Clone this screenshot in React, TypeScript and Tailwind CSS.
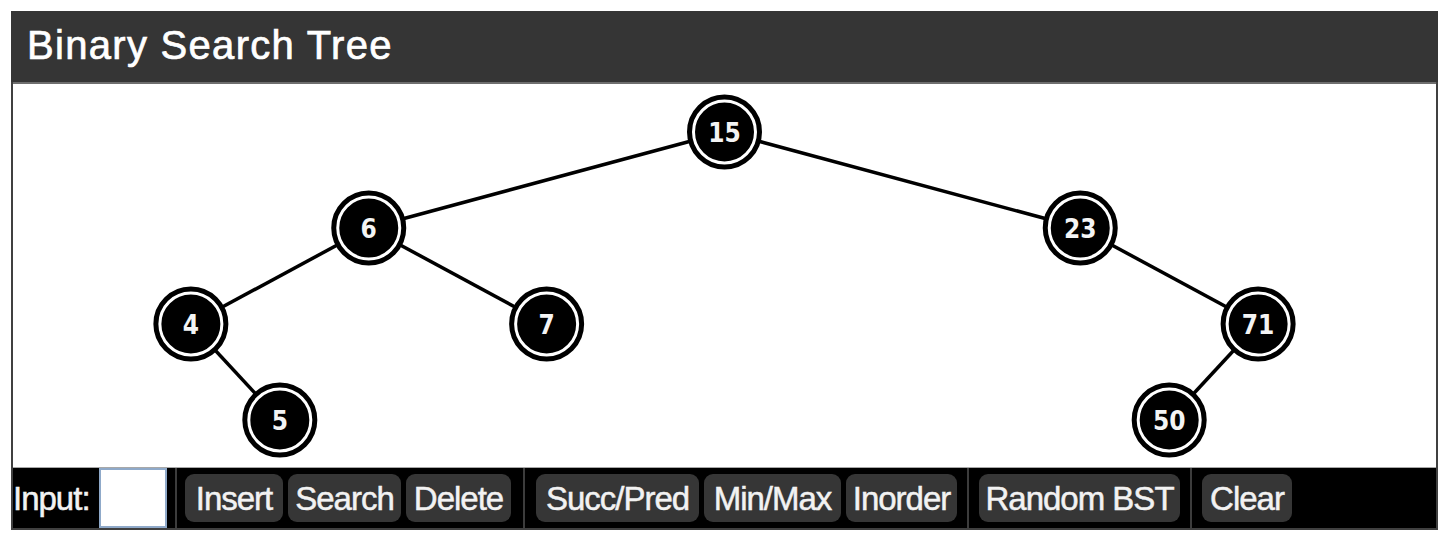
import React from "react";

type N = { v: number; x: number; d: number };

const W = 1423;
const H = 383;
const levelY = [48, 144, 240, 336];

const nodes: Record<string, N> = {
  n15: { v: 15, x: W / 2, d: 0 },
  n6: { v: 6, x: W / 4, d: 1 },
  n23: { v: 23, x: (3 * W) / 4, d: 1 },
  n4: { v: 4, x: W / 8, d: 2 },
  n7: { v: 7, x: (3 * W) / 8, d: 2 },
  n71: { v: 71, x: (7 * W) / 8, d: 2 },
  n5: { v: 5, x: (3 * W) / 16, d: 3 },
  n50: { v: 50, x: (13 * W) / 16, d: 3 },
};

const edges: [string, string][] = [
  ["n15", "n6"],
  ["n15", "n23"],
  ["n6", "n4"],
  ["n6", "n7"],
  ["n4", "n5"],
  ["n23", "n71"],
  ["n71", "n50"],
];

function Sep() {
  return <div className="w-[2px] self-stretch bg-[#3c3c3c]" />;
}

function Btn({ label, w }: { label: string; w: string }) {
  return (
    <button
      className={`${w} h-[48px] rounded-[9px] bg-[#363636] text-[#f2f2f2] text-[33px] leading-none tracking-[-1px] [-webkit-text-stroke:0.5px_#f2f2f2] flex items-center justify-center`}
      style={{ fontFamily: '"Liberation Sans", Arial, sans-serif' }}
    >
      {label}
    </button>
  );
}

export default function App() {
  return (
    <div className="w-[1454px] h-[546px] bg-white pt-[11px] pl-[11px]">
      <div className="w-[1427px]">
        <div
          className="h-[71px] bg-[#353535] flex items-center pl-[16px] pb-[3px] text-white text-[40px] leading-none tracking-[1.3px] [-webkit-text-stroke:0.7px_#ffffff]"
          style={{ fontFamily: '"Liberation Sans", Arial, sans-serif' }}
        >
          Binary Search Tree
        </div>
        <div className="border-x-2 border-b-2 border-[#404040]">
          <div className="h-[386px] bg-white border-t-2 border-t-[#6e6e6e] border-b border-b-[#a8a8a8]">
            <svg width={W} height={H} viewBox={`0 0 ${W} ${H}`} className="block">
              {edges.map(([a, b]) => (
                <line
                  key={a + b}
                  x1={nodes[a].x}
                  y1={levelY[nodes[a].d]}
                  x2={nodes[b].x}
                  y2={levelY[nodes[b].d]}
                  stroke="#000"
                  strokeWidth={3.5}
                />
              ))}
              {Object.entries(nodes).map(([k, n]) => {
                const y = levelY[n.d];
                return (
                  <g key={k}>
                    <circle cx={n.x} cy={y} r={35} fill="#000" stroke="#000" strokeWidth={5} />
                    <circle cx={n.x} cy={y} r={31} fill="#000" stroke="#fff" strokeWidth={3} />
                    <text
                      x={n.x}
                      y={y + 1}
                      fill="#f4f4f4"
                      textAnchor="middle"
                      dominantBaseline="central"
                      fontSize={26}
                      fontWeight={700}
                      fontFamily='"DejaVu Sans Condensed", "DejaVu Sans", Verdana, sans-serif'
                    >
                      {n.v}
                    </text>
                  </g>
                );
              })}
            </svg>
          </div>
          <div
            className="h-[60px] bg-black flex items-center"
            style={{ fontFamily: '"Liberation Sans", Arial, sans-serif' }}
          >
            <div className="w-[86px] text-[33px] leading-none text-[#f2f2f2] tracking-[-1px] [-webkit-text-stroke:0.5px_#f2f2f2]">
              Input:
            </div>
            <div className="w-[68px] self-stretch bg-white border-2 border-[#8fa9c9]" />
            <div className="ml-[8px] self-stretch flex">
              <Sep />
            </div>
            <div className="ml-[8px] flex gap-[5px]">
              <Btn label="Insert" w="w-[98px]" />
              <Btn label="Search" w="w-[113px]" />
              <Btn label="Delete" w="w-[105px]" />
            </div>
            <div className="ml-[12px] self-stretch flex">
              <Sep />
            </div>
            <div className="ml-[11px] flex gap-[5px]">
              <Btn label="Succ/Pred" w="w-[163px]" />
              <Btn label="Min/Max" w="w-[137px]" />
              <Btn label="Inorder" w="w-[111px]" />
            </div>
            <div className="ml-[10px] self-stretch flex">
              <Sep />
            </div>
            <div className="ml-[10px] flex">
              <Btn label="Random BST" w="w-[201px]" />
            </div>
            <div className="ml-[10px] self-stretch flex">
              <Sep />
            </div>
            <div className="ml-[10px] flex">
              <Btn label="Clear" w="w-[90px]" />
            </div>
          </div>
        </div>
      </div>
    </div>
  );
}
